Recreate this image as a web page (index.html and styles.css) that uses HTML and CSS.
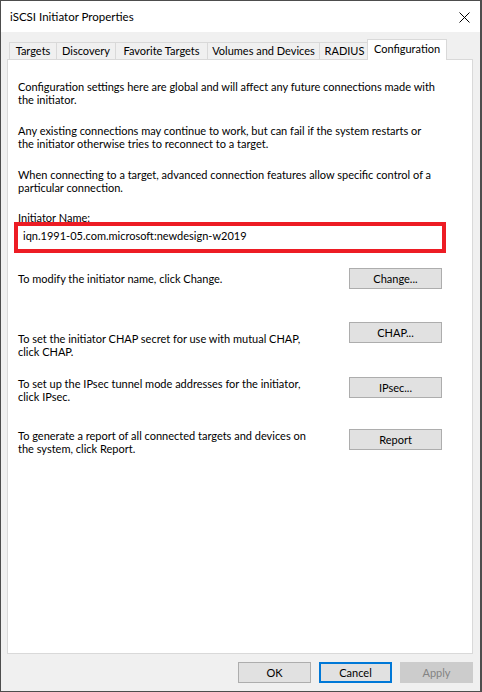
FILE: index.html
```html
<!DOCTYPE html>
<html lang="en">
<head>
<meta charset="utf-8">
<title>iSCSI Initiator Properties</title>
<link rel="stylesheet" href="styles.css">
</head>
<body>
<div class="window">
  <div class="titlebar">
    <span class="title">iSCSI Initiator Properties</span>
    <span class="close" aria-label="Close">
      <svg width="11" height="11" viewBox="0 0 11 11"><path d="M0.5 0.5 L10.5 10.5 M10.5 0.5 L0.5 10.5" stroke="#000" stroke-width="1" fill="none"/></svg>
    </span>
  </div>
  <div class="body">
    <div class="tabs">
      <div class="tab t1">Targets</div>
      <div class="tab t2">Discovery</div>
      <div class="tab t3">Favorite Targets</div>
      <div class="tab t4">Volumes and Devices</div>
      <div class="tab t5">RADIUS</div>
      <div class="tab selected t6">Configuration</div>
    </div>
    <div class="panel">
      <p class="para p1">Configuration settings here are global and will affect any future connections made with<br>the initiator.</p>
      <p class="para p2">Any existing connections may continue to work, but can fail if the system restarts or<br>the initiator otherwise tries to reconnect to a target.</p>
      <p class="para p2">When connecting to a target, advanced connection features allow specific control of a<br>particular connection.</p>
      <div class="label">Initiator Name:</div>
      <div class="highlight">
        <div class="field">iqn.1991-05.com.microsoft:newdesign-w2019</div>
      </div>
      <div class="row row-change">
        <span class="rtext">To modify the initiator name, click Change.</span>
        <span class="btn">Change...</span>
      </div>
      <div class="row row-chap">
        <span class="rtext chap-text">To set the initiator CHAP secret for use with mutual CHAP,<br>click CHAP.</span>
        <span class="btn">CHAP...</span>
      </div>
      <div class="row row-ipsec">
        <span class="rtext">To set up the IPsec tunnel mode addresses for the initiator,<br>click IPsec.</span>
        <span class="btn">IPsec...</span>
      </div>
      <div class="row row-report">
        <span class="rtext">To generate a report of all connected targets and devices on<br>the system, click Report.</span>
        <span class="btn">Report</span>
      </div>
    </div>
    <div class="footer">
      <span class="btn fbtn">OK</span>
      <span class="btn fbtn default">Cancel</span>
      <span class="btn fbtn disabled">Apply</span>
    </div>
  </div>
</div>
</body>
</html>
```
FILE: styles.css
```css
* { box-sizing: border-box; }
html, body { margin: 0; padding: 0; background: #ffffff; }
body {
  font-family: "Lato", "Noto Sans", sans-serif;
  font-size: 11px;
  color: #000;
}
.window {
  width: 482px;
  height: 692px;
  border: 1px solid #4d4d4d;
  border-right-width: 2px;
  display: flex;
  flex-direction: column;
  background: #f0f0f0;
}
.titlebar {
  height: 31px;
  background: #fff;
  display: flex;
  align-items: center;
  justify-content: space-between;
  padding: 0 10px 0 9px;
  flex: none;
}
.title { font-size: 11.5px; line-height: 14px; margin-top: 1px; }
.close { display: flex; margin-top: 1px; }
.body {
  flex: 1;
  display: flex;
  flex-direction: column;
  padding: 9px 7px 0 6px;
}
.tabs {
  display: flex;
  align-items: flex-end;
  height: 18px;
  padding-left: 2px;
  position: relative;
  z-index: 1;
}
.tab {
  height: 17px;
  border: 1px solid #d9d9d9;
  border-bottom: none;
  margin-right: -1px;
  background: #f0f0f0;
  text-align: center;
  line-height: 16px;
  white-space: nowrap;
}
.t1 { width: 48px; }
.t2 { width: 60px; }
.t3 { width: 93px; }
.t4 { width: 113px; }
.t5 { width: 51px; }
.t6 { width: 80px; }
.tab.selected {
  height: 21px;
  background: #fff;
  margin-left: -2px;
  margin-bottom: -1px;
  line-height: 17px;
}
.panel {
  height: 595px;
  background: #fff;
  border: 1px solid #d9d9d9;
  padding: 20px 30px 0 10px;
  flex: none;
}
.para {
  margin: 0;
  line-height: 13px;
  white-space: nowrap;
}
.p2 { margin-top: 18px; }
.label { margin-top: 18px; line-height: 11px; }
.highlight {
  margin-top: -1px;
  margin-left: -4px;
  width: 432px;
  height: 31px;
  border: 4px solid #ed1c24;
  background: #fff;
}
.field {
  padding: 3px 0 0 5px;
  line-height: 13px;
  white-space: nowrap;
}
.row {
  display: flex;
  justify-content: space-between;
  align-items: flex-start;
}
.rtext { line-height: 13px; white-space: nowrap; }
.row-change { margin-top: 15px; align-items: center; }
.row-chap { margin-top: 33px; }
.chap-text { margin-top: 10px; }
.row-ipsec { margin-top: 19px; }
.row-report { margin-top: 26px; }
.btn {
  width: 93px;
  height: 21px;
  background: #e1e1e1;
  border: 1px solid #adadad;
  display: flex;
  align-items: center;
  justify-content: center;
  flex: none;
}
.footer {
  display: flex;
  justify-content: flex-end;
  gap: 8px;
  margin-top: 8px;
}
.fbtn { width: 73px; }
.default { border: 2px solid #0078d7; }
.disabled { background: #cccccc; border-color: #cccccc; color: #838383; }
```
